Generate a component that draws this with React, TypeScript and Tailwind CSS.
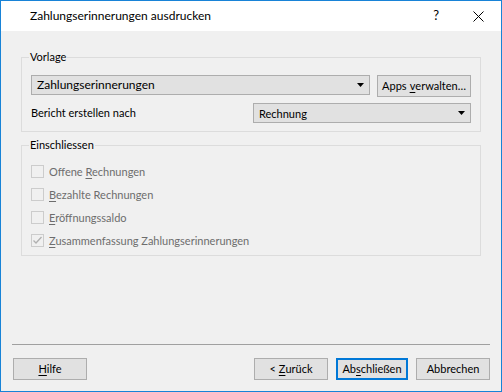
import React from "react";

const font = { fontFamily: 'Lato, "Liberation Sans", Arial, sans-serif' };

function Arrow() {
  return (
    <svg width="7" height="4" viewBox="0 0 7 4" className="block">
      <polygon points="0,0 7,0 3.5,4" fill="#000" />
    </svg>
  );
}

function Combo({ text, w, big }: { text: string; w: string; big?: boolean }) {
  return (
    <div
      className={`${w} h-[20px] bg-[#e1e1e1] border border-[#adadad] flex items-center pl-[5px] pr-[5px] text-black ${
        big ? "text-[12px]" : "text-[11px]"
      }`}
    >
      <span className="flex-1 leading-none">{text}</span>
      <Arrow />
    </div>
  );
}

function Check({ label, u, rest, checked }: { label?: string; u: string; rest: string; checked?: boolean }) {
  return (
    <div className="h-[23px] flex items-start">
      <div className="w-[13px] h-[13px] border border-[#cccccc] bg-[#f0f0f0] flex items-center justify-center">
        {checked && (
          <svg width="11" height="11" viewBox="0 0 11 11">
            <polyline points="1.5,5.5 4,8 9.5,2" fill="none" stroke="#b0b0b0" strokeWidth="1.3" />
          </svg>
        )}
      </div>
      <span className="ml-[5px] text-[11px] leading-[13px] text-[#6d6d6d]">
        {label}
        <span className="underline underline-offset-2">{u}</span>
        {rest}
      </span>
    </div>
  );
}

function Btn({ children, w, def }: { children: React.ReactNode; w: string; def?: boolean }) {
  return (
    <div
      className={`${w} h-[22px] bg-[#e1e1e1] flex items-center justify-center text-[11px] text-black ${
        def ? "border-2 border-[#0078d7]" : "border border-[#adadad]"
      }`}
    >
      {children}
    </div>
  );
}

export default function App() {
  return (
    <div style={font} className="w-[502px] h-[392px] border border-[#1883d7] flex flex-col bg-[#f0f0f0]">
      <div className="h-[30px] bg-white flex items-center shrink-0">
        <span className="ml-[29px] text-[12px] text-black">Zahlungserinnerungen ausdrucken</span>
        <span className="ml-auto mr-[34px] text-[13px] text-black">?</span>
        <svg width="11" height="11" viewBox="0 0 11 11" className="mr-[17px]">
          <path d="M0.5,0.5 L10.5,10.5 M10.5,0.5 L0.5,10.5" stroke="#000" strokeWidth="1" />
        </svg>
      </div>
      <div className="flex-1 flex flex-col">
        <div className="ml-[20px] mt-[26px] w-[460px] h-[75px] border border-[#dcdcdc] relative pl-[9px] pt-[17px]">
          <span className="absolute left-[7px] -top-[9px] px-[1px] bg-[#f0f0f0] text-[11px] text-black leading-[16px]">Vorlage</span>
          <div className="flex items-start h-[22px]">
            <Combo text="Zahlungserinnerungen" w="w-[339px]" big />
            <div className="ml-[7px]">
              <Btn w="w-[94px]">
                Apps <span className="underline underline-offset-2 ml-[3px]">v</span>erwalten…
              </Btn>
            </div>
          </div>
          <div className="flex items-center mt-[6px]">
            <span className="w-[222px] text-[11px] text-black">Bericht erstellen nach</span>
            <Combo text="Rechnung" w="w-[218px]" />
          </div>
        </div>
        <div className="ml-[20px] mt-[13px] w-[460px] h-[111px] border border-[#dcdcdc] relative pl-[9px] pt-[19px]">
          <span className="absolute left-[7px] -top-[9px] px-[1px] bg-[#f0f0f0] text-[11px] text-black leading-[16px]">Einschliessen</span>
          <Check label="Offene " u="R" rest="echnungen" />
          <Check u="B" rest="ezahlte Rechnungen" />
          <Check u="E" rest="röffnungssaldo" />
          <Check u="Z" rest="usammenfassung Zahlungserinnerungen" checked />
        </div>
        <div className="flex-1" />
        <div className="mx-[11px] h-[1px] bg-[#a0a0a0]" />
        <div className="flex mt-[13px] mb-[11px] items-start">
          <div className="ml-[12px]">
            <Btn w="w-[74px]">
              <span className="underline underline-offset-2">H</span>ilfe
            </Btn>
          </div>
          <div className="ml-auto mr-[11px] flex gap-[8px]">
            <Btn w="w-[74px]">
              &lt; <span className="underline underline-offset-2 ml-[3px]">Z</span>urück
            </Btn>
            <Btn w="w-[72px]" def>
              Ab<span className="underline underline-offset-2">s</span>chließen
            </Btn>
            <Btn w="w-[74px]">Abbrechen</Btn>
          </div>
        </div>
      </div>
    </div>
  );
}
